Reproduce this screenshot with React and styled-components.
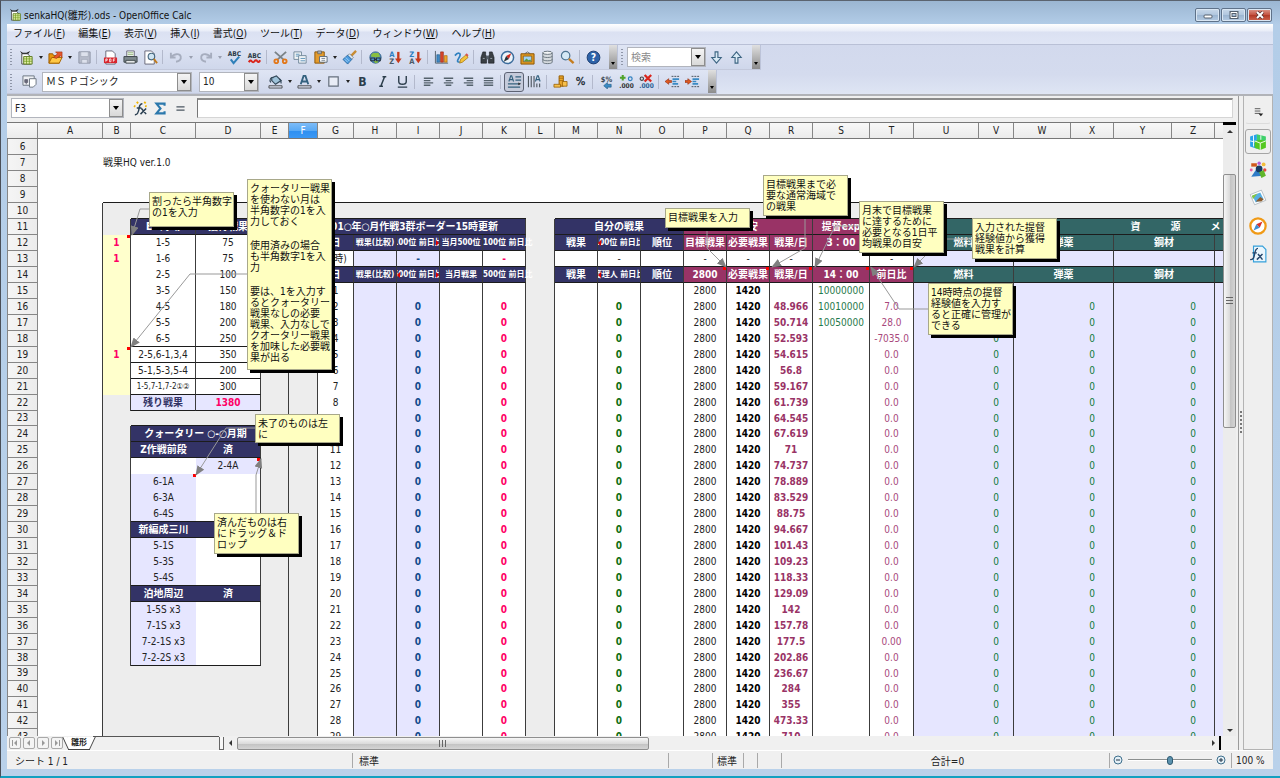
import React from "react";
import styled, { createGlobalStyle, css } from "styled-components";

const GlobalStyle = createGlobalStyle`
  * {
    box-sizing: border-box;
  }

  body {
    margin: 0;
    color: #222;
    font-family: "DejaVu Sans Condensed", "Noto Sans", "Noto Sans CJK JP", sans-serif;
    font-size: 10px;
    overflow: hidden;
  }

  button, input, select {
    margin: 0;
    padding: 0;
    border: none;
    outline: none;
    background: none;
    color: inherit;
    font: inherit;
  }
`;

// window frame
const Window = styled.div`
  display: flex;
  flex-direction: column;
  height: 100vh;
  padding: 0 7px 7px 6px;
  background: linear-gradient(#9bb6d2, #b3cde8 24px, #b9d1ea);
  border-top: 1px solid #5b6470;
  border-left: 1px solid #4a4f58;
  border-bottom: 2px solid #12a0c0;
`;

const TitleBar = styled.header`
  display: flex;
  align-items: center;
  flex: none;
  height: 23px;
  padding: 4px 1px 0 2px;
`;

const Title = styled.h1`
  flex: 1;
  margin: 0 0 0 2px;
  font-size: 10px;
  font-weight: normal;
  color: #111;
`;

const WindowButton = styled.button`
  display: flex;
  align-items: center;
  justify-content: center;
  width: 25px;
  height: 14px;
  margin-left: 1px;
  border: 1px solid #5f7289;
  border-radius: 2px;
  box-shadow: inset 0 0 0 1px #d9e6f3;
  background: ${p =>
    p.$close
      ? "linear-gradient(#dc9a8e, #c4513f 50%, #b23a28 52%, #d0664f)"
      : "linear-gradient(#c9d9ea, #b0c6de 50%, #9bb5d1 52%, #b4cbe3)"};
`;

// menu and toolbars
const MenuBar = styled.nav`
  display: flex;
  align-items: center;
  flex: none;
  gap: 13px;
  height: 21px;
  padding-left: 6px;
  background: linear-gradient(#fff, #e9edf8 7px, #dbe1f2 8px, #dfe5f5);
  border-bottom: 1px solid #b9c0d6;
`;

const MenuItem = styled.button`
  white-space: nowrap;
  line-height: 16px;
  color: #111;
`;

const Toolbars = styled.div`
  flex: none;
  height: 51px;
  background: linear-gradient(#d2d9ed, #d4dbee 60%, #dfe5f4);
  border-bottom: 2px solid #b1b3b8;
`;

const ToolRow = styled.div`
  display: flex;
  height: ${p => p.$h}px;
`;

const ToolGroup = styled.div`
  display: flex;
  align-items: center;
  padding-left: 2px;
  background: linear-gradient(#dfe5f4, #cfd7eb);
  border-right: 1px solid #bcc3d8;
  border-bottom: 1px solid #c3c9dc;
`;

const Handle = styled.span`
  width: 2px;
  height: 16px;
  margin: 0 4px 0 1px;
  background: repeating-linear-gradient(#8f96a8 0 1px, transparent 1px 3px);
`;

const ToolButton = styled.button`
  display: flex;
  align-items: center;
  justify-content: center;
  width: ${p => (p.$wide ? 26 : 20)}px;
  height: 20px;
  ${p =>
    p.$pressed &&
    css`
      background: #c5cbdb;
      border: 1px solid #5d6374;
      border-radius: 3px;
    `}
`;

const Caret = styled.button`
  width: 9px;
  height: 18px;
  display: flex;
  align-items: center;
  justify-content: center;

  &::before {
    content: "";
    border: 2px solid transparent;
    border-top: 3px solid ${p => (p.$dim ? "#9aa0b0" : "#222")};
    border-bottom: 0;
  }
`;

const Separator = styled.span`
  width: 1px;
  height: 14px;
  margin: 0 3px 0 2px;
  background: #b3b9cc;
`;

const Overflow = styled.button`
  align-self: stretch;
  display: flex;
  align-items: flex-end;
  justify-content: center;
  width: 8px;
  margin-left: 6px;
  padding-bottom: 4px;
  background: linear-gradient(#e0e0e0, #8c8c8c);

  &::before {
    content: "";
    border: 2px solid transparent;
    border-top: 3px solid #000;
    border-bottom: 0;
  }
`;

const Combo = styled.label`
  position: relative;
  display: flex;
  width: ${p => p.$w}px;
  height: 20px;
  margin-right: ${p => p.$gap || 0}px;
  background: #fff;
  border: 1px solid #b2b5bd;

  select, input {
    flex: 1;
    min-width: 0;
    padding-left: 3px;
    appearance: none;
    font-size: 10px;
  }

  input::placeholder {
    color: #8a8a8a;
    opacity: 1;
  }
`;

const ComboArrow = styled.span`
  display: flex;
  align-items: center;
  justify-content: center;
  width: 14px;
  border: 1px solid #8d8d8d;
  background: linear-gradient(#f4f4f4, #d9d9d9);
  pointer-events: none;

  &::before {
    content: "";
    border: 3px solid transparent;
    border-top: 4px solid #000;
    border-bottom: 0;
  }
`;

const Workspace = styled.div`
  display: flex;
  flex: 1;
  min-height: 0;
  background: #f0f0f0;
`;

const Main = styled.main`
  display: flex;
  flex-direction: column;
  flex: 1;
  min-width: 0;
  padding-right: 2px;
  border-right: 1px solid #9b9b9b;
`;

const FormulaBar = styled.div`
  display: flex;
  align-items: center;
  flex: none;
  height: 26px;
  padding: 0 3px 2px 4px;
`;

const FormulaButtons = styled.div`
  display: flex;
  margin: 0 7px 0 6px;
`;

const FormulaInput = styled.input`
  flex: 1;
  height: 20px;
  background: #fff;
  border: 1px solid #d5d5d5;
  border-top: 2px solid #8b8b8b;
  border-left: 1px solid #777;
`;

// sheet
const SheetRow = styled.div`
  display: flex;
  flex: 1;
  min-height: 0;
`;

const Viewport = styled.div`
  position: relative;
  flex: 1;
  min-width: 0;
  overflow: hidden;
  background: #fff;
  border-top: 1px solid #777;
`;

const Grid = styled.table`
  table-layout: fixed;
  width: 1471px;
  border-collapse: separate;
  border-spacing: 0;
`;

const ColHead = styled.th`
  height: 16px;
  padding: 0;
  line-height: 14px;
  font-weight: normal;
  color: ${p => (p.$active ? "#fff" : "#222")};
  background: ${p =>
    p.$active
      ? "linear-gradient(#7dbcf8, #5aaaf5 50%, #2e8ff0 52%, #3a98f5)"
      : "linear-gradient(#f8f8f8, #ebebeb)"};
  border-right: 1px solid #868686;
  border-bottom: 1px solid #777;
`;

const RowHead = styled.th`
  padding: 0;
  line-height: 14px;
  font-weight: normal;
  background: linear-gradient(90deg, #f5f5f5, #ececec);
  border-left: 1px solid #868686;
  border-right: 1px solid #868686;
  border-bottom: 1px solid #868686;
`;

const Line = styled.tr`
  height: ${p => p.$h}px;
`;

const Cell = styled.td`
  position: relative;
  z-index: ${p => (p.$spill ? 1 : "auto")};
  padding: 0;
  background: ${p => p.$bg};
  color: ${p => p.$color || "#222"};
  font-size: ${p => (p.$small ? 8 : 10)}px;
  font-weight: ${p => (p.$bold ? "bold" : "normal")};
  border-right: ${p => (p.$right ? "1px solid #3c3c3c" : "0")};
  border-bottom: ${p => (p.$bottom ? "1px solid #1c1c1c" : "0")};

  ${p =>
    p.$note &&
    css`
      &::after {
        content: "";
        position: absolute;
        top: 0;
        right: 0;
        width: 3px;
        height: 3px;
        background: #f00;
      }
    `}
`;

const CellText = styled.div`
  display: flex;
  justify-content: ${p => (p.$spill ? "flex-start" : "center")};
  height: 14px;
  line-height: 14px;
  white-space: pre;
  overflow: ${p => (p.$spill ? "visible" : "hidden")};
`;

const Clip = styled.i`
  position: absolute;
  top: 5px;
  ${p => p.$side}: 0;
  border: 3px solid transparent;
  border-${p => p.$side}: 0;
  border-${p => (p.$side === "left" ? "right" : "left")}-color: #e00000;
`;

const Arrows = styled.svg`
  position: absolute;
  left: 0;
  top: 0;
  width: 1216px;
  height: 616px;
`;

const Note = styled.aside`
  position: absolute;
  z-index: 2;
  width: 85px;
  padding: 3px 2px;
  background: #ffffc0;
  border: 1px solid #a8a88a;
  box-shadow: 3px 3px 0 #000;
  color: #111;
  line-height: 11px;
  white-space: pre;
`;

const NoteText = styled.p`
  margin: 0 0 ${p => (p.$last ? 0 : 13)}px;
`;

const VScroll = styled.div`
  display: flex;
  flex-direction: column;
  width: 13px;
  background: #ececec;
  border-top: 3px solid #000;
`;

const ScrollArrow = styled.button`
  display: flex;
  align-items: center;
  justify-content: center;
  flex: none;
  width: 13px;
  height: 13px;
`;

const Gap = styled.span`
  flex: ${p => p.$grow};
`;

const Thumb = styled.div`
  display: flex;
  align-items: center;
  justify-content: center;
  flex: ${p => p.$grow};
  border: 1px solid #8f8f8f;
  border-radius: 2px;
  background: linear-gradient(${p => (p.$vertical ? "90deg" : "180deg")}, #f6f6f6, #dcdcdc 50%, #c3c3c3 55%, #d4d4d4);
`;

const Grip = styled.span`
  width: 7px;
  height: 7px;
  background: repeating-linear-gradient(${p => (p.$vertical ? "180deg" : "90deg")}, #666 0 1px, transparent 1px 3px);
`;

const BottomRow = styled.div`
  display: flex;
  align-items: center;
  flex: none;
  height: 14px;
  padding-left: 2px;
`;

const NavButton = styled.button`
  display: flex;
  align-items: center;
  justify-content: center;
  width: 12px;
  height: 12px;
  margin-right: 2px;
  background: #f4f4f4;
  border: 1px solid #a9a9a9;
  border-radius: 2px;
`;

const Tab = styled.button`
  position: relative;
  height: 13px;
  margin: 0 3px;
  padding: 0 3px;
  line-height: 12px;
  font-weight: bold;
  font-size: 8px;
  background: #fff;
  border-bottom: 1px solid #444;

  &::before, &::after {
    content: "";
    position: absolute;
    top: 0;
    bottom: 0;
    width: 4px;
    background: #fff;
  }

  &::before {
    left: -3px;
    border-left: 1px solid #444;
    transform: skewX(25deg);
  }

  &::after {
    right: -3px;
    border-right: 1px solid #444;
    transform: skewX(-25deg);
  }
`;

const TabStrip = styled.div`
  width: 126px;
  height: 14px;
  border-top: 1px solid #555;
`;

const TabSplit = styled.span`
  width: 5px;
  height: 13px;
  background: #f8f8f8;
  border: 1px solid #666;
  border-top: 0;
`;

const EndMark = styled.span`
  width: 2px;
  height: 14px;
  margin-right: 15px;
  background: #000;
`;

const HScroll = styled.div`
  display: flex;
  align-items: stretch;
  flex: 1;
  height: 13px;
`;

// sidebar
const Splitter = styled.div`
  display: flex;
  align-items: center;
  justify-content: center;
  width: 4px;

  &::before {
    content: "";
    width: 2px;
    height: 24px;
    background: repeating-linear-gradient(#777 0 2px, transparent 2px 4px);
  }
`;

const Sidebar = styled.aside`
  display: flex;
  flex-direction: column;
  align-items: center;
  width: 30px;
  padding-top: 3px;
  gap: 3px;
  background: #efefef;
  border: 1px solid #b3b3b3;
  border-top: 0;
`;

const SideButton = styled.button`
  display: flex;
  align-items: center;
  justify-content: center;
  width: 26px;
  height: 25px;
  border-radius: 3px;
  border: 1px solid ${p => (p.$active ? "#a5a5a5" : "transparent")};
`;

const SideMenu = styled(SideButton)`
  margin-bottom: 2px;
  border-bottom: 1px solid #dcdcdc;
`;

const StatusBar = styled.footer`
  display: flex;
  align-items: center;
  flex: none;
  height: 19px;
  background: #f0f0f0;
  border-top: 1px solid #fff;
`;

const StatusCell = styled.div`
  display: flex;
  align-items: center;
  justify-content: ${p => (p.$center ? "center" : "flex-start")};
  flex: ${p => (p.$w ? "none" : 1)};
  width: ${p => (p.$w ? p.$w + "px" : "auto")};
  height: 15px;
  padding-left: ${p => p.$pad || 4}px;
  border-left: 1px solid ${p => (p.$first ? "transparent" : "#a9a9a9")};
  white-space: nowrap;
`;

const ZoomButton = styled.button`
  display: flex;
  flex: none;
  width: 10px;
  height: 10px;
`;

const ZoomSlider = styled.input`
  appearance: none;
  flex: none;
  width: 84px;
  height: 10px;
  margin: 0 4px 0 5px;
  background: linear-gradient(transparent 4px, #8c9090 4px 5px, #fff 5px 6px, transparent 6px);

  &::-webkit-slider-thumb {
    appearance: none;
    width: 6px;
    height: 9px;
    border: 1px solid #2d5a72;
    border-radius: 3px;
    background: #5b92ae;
  }
`;

const steel = "#2c3e4c";

// toolbar drawings on a 16px canvas
const glyphs = {
  calc: (
    <>
      <path d="M3 4h6l4 4v7H3z" fill="#fff" stroke="#444" />
      <path d="M1 1l3 2h4l4-2-2 3H3z" fill="#222" />
      <path d="M5 7h9v8H5z" fill="#e4f0a8" stroke="#5b7a1e" />
      <path d="M5 9.500h9M5 12h9M8 7v8M11 7v8" stroke="#6f9a1e" strokeWidth=".8" />
    </>
  ),
  open: (
    <>
      <path d="M1 14V4h4l1 2h6v8z" fill="#e8960c" stroke="#9a5a00" />
      <path d="M1 14l3-6h11l-3 6z" fill="#ffc845" stroke="#a86400" />
      <path d="M6 8l4-4-2-2h7v6l-2-2-4 3z" fill="#e4572e" stroke="#9c2c0c" strokeWidth=".6" />
    </>
  ),
  save: (
    <>
      <path d="M2 2h12v12H2z" fill="#b7bccb" stroke="#8f95a6" />
      <path d="M4 2h8v5H4zM5 10h6v4H5z" fill="#dde1ec" stroke="#9aa0b1" strokeWidth=".6" />
    </>
  ),
  pdf: (
    <>
      <path d="M3 1h7l3 3v11H3z" fill="#fff" stroke="#667" />
      <path d="M1 8h14v6H1z" fill="#d8242c" />
      <path d="M3 12.500V9.500h1.500v1.500H3M7 9.500h1.500v3H7zM11 12.500v-3h2M11 11h1.500" fill="none" stroke="#fff" strokeWidth=".8" />
    </>
  ),
  print: (
    <>
      <path d="M4 1h8v6H4z" fill="#fff" stroke="#667" />
      <path d="M1 7h14v6H1z" fill="#7f8a8f" stroke="#3c4549" />
      <path d="M3 11h10v3H3z" fill="#e6e9ea" stroke="#3c4549" />
      <path d="M5 3h6M5 5h6" stroke="#6a9a4a" strokeWidth=".8" />
    </>
  ),
  preview: (
    <>
      <path d="M2 1h7l3 3v11H2z" fill="#fff" stroke="#667" />
      <circle cx="9" cy="7" r="3.500" fill="#cfe4f2" stroke="#44667e" strokeWidth="1.200" />
      <path d="M11.500 9.500L15 14" stroke="#c07a1c" strokeWidth="2" />
    </>
  ),
  undo: <path d="M2 3v5h5M2.500 8c2-4 9-5 10-1 .8 3.500-2 5-5 5.500" fill="none" stroke="#a6adbe" strokeWidth="2" />,
  redo: <path d="M14 3v5H9M13.500 8c-2-4-9-5-10-1-.8 3.500 2 5 5 5.500" fill="none" stroke="#a6adbe" strokeWidth="2" />,
  spell: (
    <>
      <text x="8" y="6" fontSize="7" fontWeight="bold" textAnchor="middle" fill="#2c3b46">ABC</text>
      <path d="M4 10l3 4 6-7" fill="none" stroke="#2f80b9" strokeWidth="2.200" />
    </>
  ),
  auto: (
    <>
      <text x="8" y="8" fontSize="7" fontWeight="bold" textAnchor="middle" fill="#2c3b46">ABC</text>
      <path d="M2 13q1.500-3 3-1t3 0 3 0 3-1" fill="none" stroke="#d9251c" strokeWidth="2.200" />
    </>
  ),
  cut: (
    <>
      <path d="M2 2l9 8M14 2l-9 8" stroke="#7b8388" strokeWidth="2" />
      <circle cx="3.500" cy="12" r="2" fill="none" stroke="#e2781b" strokeWidth="2" />
      <circle cx="12.500" cy="12" r="2" fill="none" stroke="#e2781b" strokeWidth="2" />
    </>
  ),
  copy: (
    <>
      <path d="M1 2h8v8H1z" fill="#f2f5f7" stroke="#71879a" />
      <path d="M6 6h8v8H6z" fill="#f2f5f7" stroke="#71879a" />
      <path d="M3 4.500h4M3 6.500h3M8 9h5M8 11.500h5" stroke="#5a91b8" />
    </>
  ),
  paste: (
    <>
      <path d="M2 2h10v12H2z" fill="#e39b2d" stroke="#8d5505" />
      <path d="M5 1h4v3H5z" fill="#a8afb4" stroke="#555" strokeWidth=".7" />
      <path d="M7 7h8v6H7z" fill="#fff" stroke="#567" />
      <path d="M9 9h4M9 11h4" stroke="#567" strokeWidth=".8" />
    </>
  ),
  brush: (
    <>
      <path d="M15 1l-5 5" stroke="#c78c33" strokeWidth="2.500" />
      <path d="M8 4l4 4-2 2-4-4z" fill="#e6ebef" stroke="#5b6a75" strokeWidth=".7" />
      <path d="M6 5.500l4.500 4.500L6 15 1 10z" fill="#4b9be0" stroke="#1b5b93" strokeWidth=".8" />
      <path d="M4 8l4 4M3 10l3 3" stroke="#bfe0f8" strokeWidth=".8" />
    </>
  ),
  link: (
    <>
      <circle cx="8" cy="8" r="6" fill="#4f93c8" stroke="#2c5a82" />
      <path d="M4 4c3-2 4 0 7-1l2 4-4 1-6-1zM6 12l4-1 1 2-3 1z" fill="#8ac040" />
      <path d="M3 8.500h4v3H3zM9 8.500h4v3H9zM7 10h2" fill="none" stroke="#2a3640" strokeWidth="1.200" />
    </>
  ),
  sortA: (
    <>
      <text x="4" y="7" fontSize="8" fontWeight="bold" textAnchor="middle" fill="#2b7dc0">A</text>
      <text x="4" y="15" fontSize="8" fontWeight="bold" textAnchor="middle" fill="#4b5a66">Z</text>
      <path d="M11 2v8" stroke="#c63a1c" strokeWidth="2.500" />
      <path d="M7.500 9h7L11 14z" fill="#c63a1c" />
    </>
  ),
  sortZ: (
    <>
      <text x="4" y="7" fontSize="8" fontWeight="bold" textAnchor="middle" fill="#2b7dc0">Z</text>
      <text x="4" y="15" fontSize="8" fontWeight="bold" textAnchor="middle" fill="#4b5a66">A</text>
      <path d="M11 2v8" stroke="#c63a1c" strokeWidth="2.500" />
      <path d="M7.500 9h7L11 14z" fill="#c63a1c" />
    </>
  ),
  chart: (
    <>
      <path d="M1.500 1v13H15" fill="none" stroke="#52606b" />
      <path d="M3 5h3v8H3z" fill="#3f89c4" stroke="#1e5584" strokeWidth=".6" />
      <path d="M7 2h3v11H7z" fill="#d8452a" stroke="#8c200c" strokeWidth=".6" />
      <path d="M11 6h3v7h-3z" fill="#f0a52a" stroke="#9a5f00" strokeWidth=".6" />
    </>
  ),
  draw: (
    <>
      <path d="M1 6c3-4 7-3 5 1s-4 6 0 6" fill="none" stroke="#2f80c0" strokeWidth="1.800" />
      <path d="M6 14l1-4 6-5 2 3-6 5z" fill="#f4c33a" stroke="#9c6a00" strokeWidth=".7" />
      <path d="M12 5l1.500-1.500 2 2L14 7z" fill="#d9534f" />
    </>
  ),
  find: (
    <>
      <path d="M3 2h3v3l1 2v7H1V8zM13 2h-3v3L9 7v7h6V8z" fill="#3a3f44" stroke="#16191c" strokeWidth=".6" />
      <path d="M7 6h2v4H7z" fill="#55606a" />
      <path d="M3 9h2M11 9h2" stroke="#9aa5ad" />
    </>
  ),
  compass: (
    <>
      <circle cx="8" cy="8" r="6.500" fill="#eef4f9" stroke="#3d6d9c" strokeWidth="1.600" />
      <path d="M12 3.500L9.500 9.500 6.500 6.500z" fill="#d12c22" />
      <path d="M4 12.500l2.500-6 3 3z" fill="#28323a" />
    </>
  ),
  gallery: (
    <>
      <path d="M1 4h14v11H1z" fill="#e09a22" stroke="#8a5300" />
      <path d="M3.500 6.500h9v6h-9z" fill="#9fd2f3" stroke="#7a4a00" strokeWidth=".7" />
      <path d="M4 12l3-3 2 2 2-1 1 2z" fill="#5b9b3a" />
      <path d="M5 4l3-2 3 2" fill="none" stroke="#555" strokeWidth=".8" />
    </>
  ),
  data: (
    <>
      <path d="M3 3v10c0 2 10 2 10 0V3z" fill="#d5dade" stroke="#66727c" />
      <ellipse cx="8" cy="3" rx="5" ry="1.700" fill="#f3f5f6" stroke="#66727c" />
      <path d="M3 6.500c0 2 10 2 10 0M3 10c0 2 10 2 10 0" fill="none" stroke="#66727c" />
    </>
  ),
  zoom: (
    <>
      <circle cx="6" cy="6" r="4.500" fill="#d4e8f5" stroke="#4c7390" strokeWidth="1.300" />
      <path d="M9.500 9.500L14.500 14" stroke="#c57d1f" strokeWidth="2.500" />
    </>
  ),
  help: (
    <>
      <circle cx="8" cy="8" r="6.800" fill="#2d62a8" stroke="#1a3c70" />
      <text x="8" y="12" fontSize="11" fontWeight="bold" textAnchor="middle" fill="#fff">?</text>
    </>
  ),
  down: <path d="M6.500 2h3v6H13l-5 6-5-6h3.500z" fill="#d9eaf5" stroke="#3d6582" strokeWidth="1.200" />,
  up: <path d="M6.500 14h3V8H13L8 2 3 8h3.500z" fill="#d9eaf5" stroke="#3d6582" strokeWidth="1.200" />,
  styles: (
    <>
      <path d="M1 2h12v10H1z" fill="#eef0f4" stroke="#6b7480" />
      <path d="M8 5h7v6l-3 3H8z" fill="#fff" stroke="#6b7480" />
      <path d="M3 6h3v3H3zM4.500 9v2" fill="#667" stroke="#667" />
    </>
  ),
  fill: (
    <>
      <path d="M4 4l5-2 5 5-6 4-4-4z" fill="#9fc3da" stroke="#34495a" strokeWidth="1.300" />
      <path d="M3 9c-2-3 0-6 3-5M12 5c2 1 2 3 2 5" fill="none" stroke="#34495a" strokeWidth="1.200" />
      <path d="M1 12.500h14v2.500H1z" fill="#cfd6e4" stroke="#333" strokeWidth=".8" />
    </>
  ),
  fontColor: (
    <>
      <path d="M4 11l3-9h2l3 9M5.500 8h5" fill="none" stroke="#34627f" strokeWidth="2" />
      <path d="M1 12.500h14v2.500H1z" fill="#cfd6e4" stroke="#333" strokeWidth=".8" />
    </>
  ),
  border: <path d="M3 3h10v10H3z" fill="#e9edf6" stroke="#66707e" strokeWidth="1.300" />,
  bold: <text x="8" y="13" fontSize="13" fontWeight="bold" textAnchor="middle" fill={steel}>B</text>,
  italic: <path d="M8 3h4M4.500 13h4M10.200 3l-4 10" stroke={steel} strokeWidth="1.600" />,
  underline: <path d="M4 2v6c0 4 8 4 8 0V2M3 14h10" fill="none" stroke={steel} strokeWidth="1.500" />,
  left: <path d="M3 4.500h10M3 7h7M3 9.500h10M3 12h7" stroke="#55626c" strokeWidth="1.400" />,
  center: <path d="M3 4.500h10M5 7h6M3 9.500h10M5 12h6" stroke="#55626c" strokeWidth="1.400" />,
  right: <path d="M3 4.500h10M6 7h7M3 9.500h10M6 12h7" stroke="#55626c" strokeWidth="1.400" />,
  justify: <path d="M3 4.500h10M3 7h10M3 9.500h10M3 12h10" stroke="#55626c" strokeWidth="1.400" />,
  ltr: (
    <>
      <path d="M2 8l2-6h1l2 6M3 6h3M9 3h6M9 6.500h6M1 10.500h13M1 14h13" fill="none" stroke="#34627f" strokeWidth="1.200" />
      <path d="M12 9l3 1.500-3 1.500z" fill="#333" />
    </>
  ),
  ttb: (
    <>
      <path d="M9 8l2-6h1l2 6M10 6h3" fill="none" stroke="#34627f" strokeWidth="1.200" />
      <path d="M1.500 2v12M4.500 2v12M7.500 2v12M10.500 10v4M13.500 10v4" stroke="#444c54" strokeWidth="1.100" />
    </>
  ),
  currency: (
    <>
      <path d="M6.500 2h4.500v11H6.500z" fill="#eda82c" stroke="#935b00" />
      <path d="M6.500 4.500H11M6.500 7H11" stroke="#935b00" strokeWidth=".7" />
      <path d="M1 11h7v3H1zM10 8h5v5h-5z" fill="#f6bf4b" stroke="#935b00" strokeWidth=".8" />
    </>
  ),
  percent: <text x="8" y="12" fontSize="12" textAnchor="middle" fill="#222c35" stroke="#222c35" strokeWidth=".4">%</text>,
  number: (
    <>
      <text x="8" y="8" fontSize="8" fontWeight="bold" textAnchor="middle" fill="#3a464f">$%</text>
      <path d="M13 11H9V9l-4 3.500L9 16v-2h4z" fill="#3a8ac4" stroke="#1f567f" strokeWidth=".6" />
    </>
  ),
  addDec: (
    <>
      <path d="M4 1v6M1 4h6" stroke="#4fa32a" strokeWidth="2.200" />
      <circle cx="12" cy="5" r="2" fill="none" stroke="#2f80c0" strokeWidth="1.300" />
      <text x="8" y="15" fontSize="7" fontWeight="bold" textAnchor="middle" fill="#333">.000</text>
    </>
  ),
  delDec: (
    <>
      <path d="M6 1l7 7M13 1L6 8" stroke="#d9251c" strokeWidth="2.400" />
      <circle cx="3" cy="5" r="1.800" fill="none" stroke="#444" strokeWidth="1.200" />
      <text x="8" y="15" fontSize="7" fontWeight="bold" textAnchor="middle" fill="#2b5f94">.000</text>
    </>
  ),
  outdent: (
    <>
      <path d="M7 2.500h8M7 13.500h8" stroke="#444c54" strokeDasharray="2 1" />
      <path d="M8 5.500h7M8 8h4M8 10.500h6" stroke="#3a8ac4" strokeWidth="1.700" />
      <path d="M0 8l4-3v2h3v2H4v2z" fill="#e05a20" stroke="#8c2408" strokeWidth=".6" />
    </>
  ),
  indent: (
    <>
      <path d="M7 2.500h8M7 13.500h8" stroke="#444c54" strokeDasharray="2 1" />
      <path d="M8 5.500h7M8 8h4M8 10.500h6" stroke="#3a8ac4" strokeWidth="1.700" />
      <path d="M7 8L3 5v2H0v2h3v2z" fill="#e05a20" stroke="#8c2408" strokeWidth=".6" />
    </>
  ),
  fx: (
    <>
      <path d="M10 3C7 3 7 5 6.500 8S5 15 2 14.500M4 7.500h5M9 8l5 6M14 8l-6 6" fill="none" stroke="#2b4052" strokeWidth="1.600" />
      <path d="M4 1l1.500 1.500M12 1l1.500 1.500M13 5l1.500 1M1 5l1.500 1" stroke="#f0b400" strokeWidth="2" />
    </>
  ),
  sum: <path d="M13 4.500V2H3l5 6-5 6h10v-2.500" fill="none" stroke="#2b78ac" strokeWidth="2.600" />,
  equals: <path d="M3 6h10M3 10h10" stroke="#4a5560" strokeWidth="1.500" />,
  sideMenu: (
    <>
      <path d="M4 5h6M4 7.500h6M4 10h6" stroke="#555" />
      <path d="M8 10h5l-2.500 3z" fill="#222" />
    </>
  ),
  cubes: (
    <>
      <path d="M1 3l6-2v13l-6-2z" fill="#29a3ea" />
      <path d="M7 1l8 2v5l-8 2z" fill="#3fd06a" />
      <path d="M5 7l5-1 5 1v6l-5 2-5-2z" fill="#54c920" />
      <path d="M5 7l5 2 5-2M10 9v6M1 7l4 1M4 2v10M10.500 2v4" fill="none" stroke="#fff" strokeWidth=".8" />
    </>
  ),
  shapes: (
    <>
      <path d="M2 14L8 5l5 8z" fill="#2f7cc8" />
      <circle cx="9" cy="7" r="3" fill="#163b63" />
      <path d="M2 2h5v3H2z" fill="#d0581c" />
      <circle cx="9" cy="2" r="1.500" fill="#b45bd6" />
      <circle cx="13" cy="3" r="1.700" fill="#f3bd3a" />
      <circle cx="14" cy="8" r="1.500" fill="#e8453c" />
      <circle cx="2" cy="8" r="1.300" fill="#e861a8" />
      <path d="M9 10l4-2 2 5-4 2z" fill="#5fb52a" />
    </>
  ),
  photos: (
    <>
      <path d="M1 5l10-4 4 9-10 4z" fill="#fff" stroke="#a9b3b9" strokeWidth=".7" />
      <path d="M3 6l7-3 3 6-7 3z" fill="#57aee3" />
      <path d="M2.500 6l5-2-4 5z" fill="#84c440" />
      <path d="M6 11l4-4 3 2-2 2z" fill="#8a5b2e" />
    </>
  ),
  navigator: (
    <>
      <circle cx="8" cy="8" r="6.800" fill="#fff" stroke="#f09a16" strokeWidth="2" />
      <path d="M12 4L9.500 9.500 6.500 6.500z" fill="#d8322a" />
      <path d="M4 12l2.500-5.500 3 3z" fill="#3f8fd2" />
    </>
  ),
  functions: (
    <>
      <path d="M4 1h8l3 3v11H4z" fill="#eaf6fd" stroke="#35a0da" />
      <path d="M8 3C6 3 5.500 5 5 8S4 13 1 13M3 7h4M8 8l4 5M12 8l-5 5" fill="none" stroke="#26466b" strokeWidth="1.300" />
    </>
  )
};

const Icon = ({ name, size = 15 }) => (
  <svg width={size} height={size} viewBox="0 0 16 16" aria-hidden="true">
    {glyphs[name]}
  </svg>
);

// "|" is a separator, "v" a drop-down caret, "x" a greyed caret
const standardTools = "calc v open v save | pdf print preview | undo x redo x spell auto | cut copy paste v brush | link sortA sortZ | chart draw | find compass gallery data zoom | help";
const formatTools = "fill v fontColor v border v bold italic underline | left center right justify | ltr ttb | currency percent | number addDec delDec | outdent indent";

const Tools = ({ list }) =>
  list.split(" ").map((name, i) => {
    if (name === "|") return <Separator key={i} />;
    if (name === "v" || name === "x") return <Caret key={i} $dim={name === "x"} aria-label="more" />;
    return (
      <ToolButton key={i} $pressed={name === "ltr"} aria-label={name}>
        <Icon name={name} />
      </ToolButton>
    );
  });

const menus = [
  ["ファイル", "F"],
  ["編集", "E"],
  ["表示", "V"],
  ["挿入", "I"],
  ["書式", "O"],
  ["ツール", "T"],
  ["データ", "D"],
  ["ウィンドウ", "W"],
  ["ヘルプ", "H"]
];

const columns = [
  ["A", 65], ["B", 28], ["C", 65], ["D", 65], ["E", 28], ["F", 29], ["G", 36],
  ["H", 43], ["I", 43], ["J", 43], ["K", 43], ["L", 29], ["M", 43], ["N", 43],
  ["O", 43], ["P", 43], ["Q", 43], ["R", 43], ["S", 57], ["T", 44], ["U", 65],
  ["V", 35], ["W", 57], ["X", 43], ["Y", 58], ["Z", 43], ["AA", 263]
];
const names = columns.map(c => c[0]);
const at = name => names.indexOf(name);

const NAVY = "#333366";
const PLUM = "#993366";
const TEAL = "#336666";
const LAVENDER = "#e6e6ff";
const GRAY = "#ededed";

const texts = {
  B12: "1", B13: "1", B19: "1",
  C11: "EO海域", D11: "獲得戦果",
  C12: "1-5", D12: "75", C13: "1-6", D13: "75", C14: "2-5", D14: "100",
  C15: "3-5", D15: "150", C16: "4-5", D16: "180", C17: "5-5", D17: "200",
  C18: "6-5", D18: "250", C19: "2-5,6-1,3,4", D19: "350",
  C20: "5-1,5-3,5-4", D20: "200", C21: "1-5,7-1,7-2①②", D21: "300",
  C22: "残り戦果", D22: "1380",
  C24: "クォータリー ○-○月期", C25: "Z作戦前段", D25: "済", D26: "2-4A",
  C27: "6-1A", C28: "6-3A", C29: "6-4S", C30: "新編成三川",
  C31: "5-1S", C32: "5-3S", C33: "5-4S", C34: "泊地周辺", D34: "済",
  C35: "1-5S x3", C36: "7-1S x3", C37: "7-2-1S x3", C38: "7-2-2S x3",
  B7: "戦果HQ ver.1.0",
  G11: "201○年○月作戦3群ボーダー15時更新　　",
  M11: "自分の戦果", P11: "目安", S11: "提督exp", U11: "資　　　源　　　メ　　　　",
  G12: "日", H12: "戦果(比較)", I12: "100位 前日比", J12: "当月500位", K12: "100位 前日比",
  M12: "戦果", N12: "100位 前日比", O12: "順位", P12: "目標戦果", Q12: "必要戦果",
  R12: "戦果/日", S12: "3：00", U12: "燃料", W12: "弾薬", Y12: "鋼材",
  G13: "(3時)", I13: "-", K13: "-", N13: "-", P13: "-", Q13: "-", R13: "-", T13: "-",
  G14: "日", H14: "戦果(比較)", I14: "500位 前日比", J14: "当月戦果", K14: "500位 前日比",
  M14: "戦果", N14: "管理人 前日比", O14: "順位", P14: "2800", Q14: "必要戦果",
  R14: "戦果/日", S14: "14：00", T14: "前日比", U14: "燃料", W14: "弾薬", Y14: "鋼材",
  S15: "10000000", S16: "10010000", S17: "10050000",
  T16: "7.0", T17: "28.0", T18: "-7035.0", T37: "0.00"
};

const perDay = [
  "48.966", "50.714", "52.593", "54.615", "56.8", "59.167", "61.739", "64.545",
  "67.619", "71", "74.737", "78.889", "83.529", "88.75", "94.667", "101.43",
  "109.23", "118.33", "129.09", "142", "157.78", "177.5", "202.86", "236.67",
  "284", "355", "473.33", "710"
];

const spans = { C24: 2, G11: 5, M11: 3, P11: 3, U11: 7 };
[12, 13, 14].forEach(r => {
  spans["U" + r] = 2;
  spans["W" + r] = 2;
  spans["Y" + r] = 2;
});

const noted = ["B12", "B19", "D26", "C27", "P14", "Q14", "R14", "S14", "T14"];
const clipped = { I12: ["right"], I14: ["left", "right"], N12: ["left"], N14: ["left"] };
const tiny = /^([HIJKN]1[24]|C21)$/;
const spilled = ["B7", "K12", "K14"];

const textFor = (name, row) => {
  const fixed = texts[name + row];
  if (fixed !== undefined) return fixed;
  if (row < 15) return "";
  if (name === "G") return String(row - 14);
  if (name === "P") return "2800";
  if (name === "Q") return "1420";
  if (row < 16) return "";
  if (name === "R") return perDay[row - 16];
  if (name === "T") return "0.0";
  return ["I", "K", "N", "V", "X", "Z"].includes(name) ? "0" : "";
};

const colors = {
  B: "#ff0066", I: "#114a8c", K: "#ff0066", N: "#0c6e12", Q: "#000", R: PLUM,
  S: "#1f7a4c", T: "#a8487c", V: "#0f7a3a", X: "#0f7a3a", Z: "#0f7a3a"
};

const looksFor = (name, row) => {
  const i = at(name);
  const inEo = row >= 11 && row <= 22;
  const inQuarter = row >= 24 && row <= 38;
  const look = { $bg: "#fff", $color: colors[name] };

  if (row < 10 || i === 0) {
    look.$bottom = row === 9 && i > 0;
    look.$right = row > 9;
    if (row < 10) look.$color = "#222";
    return look;
  }
  if (row === 10) {
    look.$bg = GRAY;
    look.$bottom = (i >= at("G") || name === "C" || name === "D") && name !== "L";
    return look;
  }
  if (i >= at("G") && name !== "L") {
    const head = row === 11 || row === 12 || row === 14;
    look.$right = !["U", "W", "Y"].includes(name);
    look.$bottom = row < 15;
    look.$bold = head || ["I", "K", "N", "Q", "R"].includes(name);
    if (head) {
      look.$color = "#fff";
      look.$bg = i < at("P") ? NAVY : i < at("U") ? PLUM : TEAL;
    } else if (name === "H" || name === "I" || i >= at("U")) {
      look.$bg = LAVENDER;
    }
    if (row === 13 && !["I", "K"].includes(name)) {
      look.$color = "#222";
      look.$bold = false;
    }
    return look;
  }
  look.$bg = GRAY;
  if (name === "B") {
    look.$bold = true;
    if (row >= 12 && row <= 21) look.$bg = "#ffffcc";
    look.$right = inEo || inQuarter;
  } else if (name === "C" || name === "D") {
    const head = [11, 24, 25, 30, 34].includes(row);
    look.$bottom = [11, 18, 19, 20, 21, 22, 23, 24, 25, 29, 30, 33, 34, 38].includes(row);
    look.$right = inEo || (inQuarter && name === "D");
    if (inEo || inQuarter) look.$bg = "#fff";
    if (row === 22 || (name === "C" && row > 26 && inQuarter) || (name === "D" && row === 26)) look.$bg = LAVENDER;
    if (head) {
      look.$bg = NAVY;
      look.$color = "#fff";
      look.$bold = true;
    }
    if (row === 22) {
      look.$bold = true;
      look.$color = name === "C" ? NAVY : "#ff0066";
    }
  } else {
    look.$right = true;
  }
  return look;
};

const SheetCells = ({ row }) => {
  const cells = [];
  for (let i = 0; i < names.length; i++) {
    const name = names[i];
    const key = name + row;
    const span = spans[key] || 1;
    const look = looksFor(name, row);
    const spill = spilled.includes(key);
    if (span > 1) look.$right = looksFor(names[i + span - 1], row).$right;
    const text = textFor(name, row);
    cells.push(
      <Cell key={key} colSpan={span} {...look} $spill={spill} $small={tiny.test(key)} $note={noted.includes(key)}>
        {text && <CellText $spill={spill}>{text}</CellText>}
        {(clipped[key] || []).map(side => <Clip key={side} $side={side} />)}
      </Cell>
    );
    i += span - 1;
  }
  return cells;
};

const notes = [
  { x: 142, y: 69, h: 35, text: ["割ったら半角数字\nの1を入力"] },
  {
    x: 240, y: 56, h: 191,
    text: [
      "クォータリー戦果\nを使わない月は\n半角数字の1を入\n力しておく",
      "使用済みの場合\nも半角数字1を入\n力",
      "要は、1を入力す\nるとクォータリー\n戦果なしの必要\n戦果、入力なしで\nクオータリー戦果\nを加味した必要戦\n果が出る"
    ]
  },
  { x: 248, y: 291, h: 29, text: ["未了のものは左\nに"] },
  { x: 207, y: 390, h: 41, text: ["済んだものは右\nにドラッグ＆ド\nロップ"] },
  { x: 658, y: 85, h: 20, text: ["目標戦果を入力"] },
  { x: 756, y: 52, h: 41, text: ["目標戦果まで必\n要な通常海域で\nの戦果"] },
  { x: 852, y: 78, h: 52, text: ["月末で目標戦果\nに達するために\n必要となる1日平\n均戦果の目安"] },
  { x: 965, y: 95, h: 41, text: ["入力された提督\n経験値から獲得\n戦果を計算"] },
  { x: 921, y: 160, h: 52, text: ["14時時点の提督\n経験値を入力す\nると正確に管理が\nできる"] }
];

const arrows = [
  "142,86 133,86 125,112",
  "240,151 183,151 124,224",
  "248,305 219,305 189,352",
  "249,390 249,352 254,336",
  "700,105 700,125 719,144",
  "798,93 798,125 765,144",
  "852,103 828,103 808,144",
  "965,116 935,116 907,144",
  "921,186 892,186 864,144"
];

// the blank row under each small table is a pixel shorter
const rowHeight = row => (row === 23 || row === 39 ? 15 : 16);
const rows = Array.from({ length: 38 }, (_, i) => i + 6);

const Sheet = () => (
  <Viewport>
    <Grid>
      <colgroup>
        <col style={{ width: 31 }} />
        {columns.map(([name, width]) => <col key={name} style={{ width }} />)}
      </colgroup>
      <thead>
        <tr>
          <ColHead aria-label="all" />
          {names.map(name => <ColHead key={name} scope="col" $active={name === "F"}>{name}</ColHead>)}
        </tr>
      </thead>
      <tbody>
        {rows.map(row => (
          <Line key={row} $h={rowHeight(row)}>
            <RowHead scope="row">{row}</RowHead>
            <SheetCells row={row} />
          </Line>
        ))}
      </tbody>
    </Grid>
    <Arrows aria-hidden="true">
      <defs>
        <marker id="head" markerWidth="10" markerHeight="8" refX="9" refY="4" orient="auto" markerUnits="userSpaceOnUse">
          <path d="M0 0l10 4-10 4z" fill="#808080" />
        </marker>
      </defs>
      {arrows.map(points => (
        <polyline key={points} points={points} fill="none" stroke="#999" markerEnd="url(#head)" />
      ))}
    </Arrows>
    {notes.map(note => (
      <Note key={note.x} style={{ left: note.x, top: note.y, height: note.h }}>
        {note.text.map((text, i) => (
          <NoteText key={i} $last={i === note.text.length - 1}>{text}</NoteText>
        ))}
      </Note>
    ))}
  </Viewport>
);

const Tri = ({ d, fill = "#333" }) => (
  <svg width="8" height="8" viewBox="0 0 8 8" aria-hidden="true">
    <path d={d} fill={fill} />
  </svg>
);

const sheetNav = ["M1 1h1v6H1zM6 1v6L3 4z", "M5 1v6L2 4z", "M3 1v6l3-3z", "M2 1v6l3-3zM6 1h1v6H6z"];

const App = () => (
  <>
    <GlobalStyle />
    <Window>
      <TitleBar>
        <Icon name="calc" size={13} />
        <Title>senkaHQ(雛形).ods - OpenOffice Calc</Title>
        <WindowButton aria-label="minimize">
          <svg width="10" height="8"><rect x="1" y="4" width="8" height="3" rx="1" fill="#fff" stroke="#55606e" /></svg>
        </WindowButton>
        <WindowButton aria-label="maximize">
          <svg width="10" height="8">
            <path d="M2 1.500h6v5H2z" fill="none" stroke="#55606e" strokeWidth="3" />
            <path d="M2 1.500h6v5H2z" fill="none" stroke="#fff" />
          </svg>
        </WindowButton>
        <WindowButton $close aria-label="close">
          <svg width="10" height="8">
            <path d="M2 1l6 6M8 1L2 7" stroke="#5a3030" strokeWidth="3.500" />
            <path d="M2 1l6 6M8 1L2 7" stroke="#fff" strokeWidth="2" />
          </svg>
        </WindowButton>
      </TitleBar>
      <MenuBar>
        {menus.map(([label, key]) => (
          <MenuItem key={key}>{label}(<u>{key}</u>)</MenuItem>
        ))}
      </MenuBar>
      <Toolbars>
        <ToolRow $h={25}>
          <ToolGroup>
            <Handle />
            <Tools list={standardTools} />
            <Overflow aria-label="more tools" />
          </ToolGroup>
          <ToolGroup>
            <Handle />
            <Combo $w={79}>
              <input placeholder="検索" aria-label="検索" />
              <ComboArrow />
            </Combo>
            <Tools list="down up" />
            <Overflow aria-label="more search" />
          </ToolGroup>
        </ToolRow>
        <ToolRow $h={24}>
          <ToolGroup>
            <Handle />
            <ToolButton $wide aria-label="styles"><Icon name="styles" /></ToolButton>
            <Combo $w={150} $gap={7}>
              <select aria-label="font"><option>ＭＳ Ｐゴシック</option></select>
              <ComboArrow />
            </Combo>
            <Combo $w={60} $gap={6}>
              <select aria-label="size"><option>10</option></select>
              <ComboArrow />
            </Combo>
            <Tools list={formatTools} />
            <Overflow aria-label="more formatting" />
          </ToolGroup>
        </ToolRow>
      </Toolbars>
      <Workspace>
        <Main>
          <FormulaBar>
            <Combo $w={113}>
              <input defaultValue="F3" aria-label="cell" />
              <ComboArrow />
            </Combo>
            <FormulaButtons>
              <ToolButton aria-label="wizard"><Icon name="fx" /></ToolButton>
              <ToolButton aria-label="sum"><Icon name="sum" size={13} /></ToolButton>
              <ToolButton aria-label="function"><Icon name="equals" size={13} /></ToolButton>
            </FormulaButtons>
            <FormulaInput aria-label="formula" />
          </FormulaBar>
          <SheetRow>
            <Sheet />
            <VScroll>
              <ScrollArrow aria-label="up"><Tri d="M1 5h6L4 2z" /></ScrollArrow>
              <Gap $grow={36} />
              <Thumb $vertical $grow={253}><Grip $vertical /></Thumb>
              <Gap $grow={297} />
              <ScrollArrow aria-label="down"><Tri d="M1 3h6L4 6z" /></ScrollArrow>
            </VScroll>
          </SheetRow>
          <BottomRow>
            {sheetNav.map(d => (
              <NavButton key={d} aria-label="sheet navigation"><Tri d={d} fill="#999" /></NavButton>
            ))}
            <Tab>雛形</Tab>
            <TabStrip />
            <TabSplit />
            <HScroll>
              <ScrollArrow aria-label="left"><Tri d="M5 1v6L2 4z" /></ScrollArrow>
              <Thumb $grow={411}><Grip /></Thumb>
              <Gap $grow={559} />
              <ScrollArrow aria-label="right"><Tri d="M3 1v6l3-3z" /></ScrollArrow>
            </HScroll>
            <EndMark />
          </BottomRow>
        </Main>
        <Splitter />
        <Sidebar>
          <SideMenu aria-label="sidebar settings"><Icon name="sideMenu" /></SideMenu>
          <SideButton $active aria-label="properties"><Icon name="cubes" size={18} /></SideButton>
          <SideButton aria-label="styles"><Icon name="shapes" size={18} /></SideButton>
          <SideButton aria-label="gallery"><Icon name="photos" size={18} /></SideButton>
          <SideButton aria-label="navigator"><Icon name="navigator" size={18} /></SideButton>
          <SideButton aria-label="functions"><Icon name="functions" size={18} /></SideButton>
        </Sidebar>
      </Workspace>
      <StatusBar>
        <StatusCell $w={345} $pad={7} $first>シート 1 / 1</StatusCell>
        <StatusCell $w={316} $pad={6}>標準</StatusCell>
        <StatusCell $w={44} />
        <StatusCell $w={31}>標準</StatusCell>
        <StatusCell $w={14} />
        <StatusCell $w={24} />
        <StatusCell $center>合計=0</StatusCell>
        <StatusCell $w={122} $pad={3}>
          <ZoomButton aria-label="zoom out">
            <svg width="10" height="10"><circle cx="5" cy="5" r="4" fill="#e4f0f7" stroke="#3f6f8c" /><path d="M3 5h4" stroke="#234" /></svg>
          </ZoomButton>
          <ZoomSlider type="range" aria-label="zoom" />
          <ZoomButton aria-label="zoom in">
            <svg width="10" height="10"><circle cx="5" cy="5" r="4" fill="#e4f0f7" stroke="#3f6f8c" /><path d="M3 5h4M5 3v4" stroke="#234" /></svg>
          </ZoomButton>
        </StatusCell>
        <StatusCell $w={42}>100 %</StatusCell>
      </StatusBar>
    </Window>
  </>
);

export default App;
